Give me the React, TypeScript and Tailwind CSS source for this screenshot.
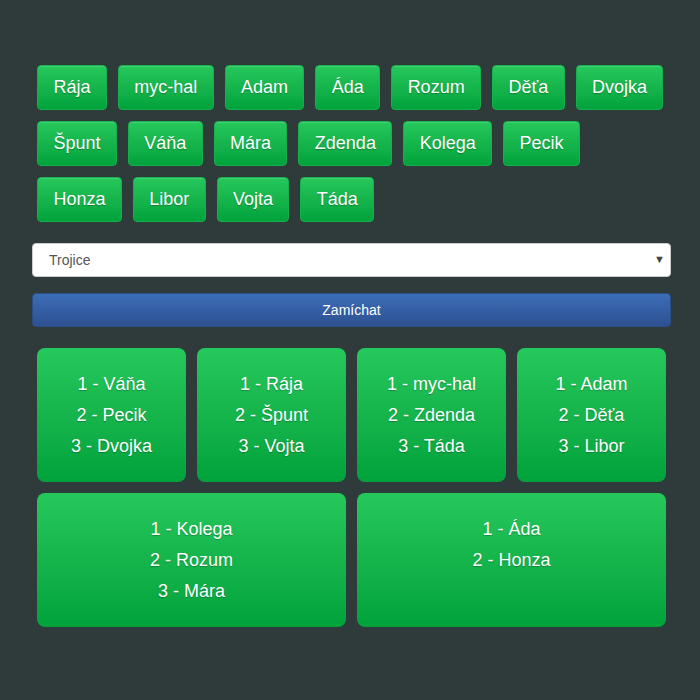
import React, { useState } from 'react';

const people = [
  'Rája', 'myc-hal', 'Adam', 'Áda', 'Rozum', 'Děťa', 'Dvojka',
  'Špunt', 'Váňa', 'Mára', 'Zdenda', 'Kolega', 'Pecik',
  'Honza', 'Libor', 'Vojta', 'Táda',
];

const groups: string[][] = [
  ['Váňa', 'Pecik', 'Dvojka'],
  ['Rája', 'Špunt', 'Vojta'],
  ['myc-hal', 'Zdenda', 'Táda'],
  ['Adam', 'Děťa', 'Libor'],
  ['Kolega', 'Rozum', 'Mára'],
  ['Áda', 'Honza'],
];

const greenBox =
  'bg-gradient-to-b from-[#25c85c] to-[#00a23c] text-white [text-shadow:0_1px_1px_rgba(0,0,0,0.25)]';

const App: React.FC = () => {
  const [mode, setMode] = useState('Trojice');

  return (
    <div className="min-h-screen bg-[#2f3b3b] pt-[60px] font-['Liberation_Sans',Arial,sans-serif]">
      <div className="ml-8 w-[639px]">
        {/* People */}
        <div className="flex flex-wrap gap-[11px] p-[5px]">
          {people.map((name) => (
            <button
              key={name}
              className={`${greenBox} rounded-[4px] border border-[#16b04c] px-[15.4px] py-[9px] text-[18px] leading-[25px] shadow-[inset_0_1px_0_rgba(255,255,255,0.15)]`}
            >
              {name}
            </button>
          ))}
        </div>

        {/* Mode select */}
        <div className="relative mt-4">
          <select
            value={mode}
            onChange={(e) => setMode(e.target.value)}
            className="h-[34px] w-full appearance-none rounded-[4px] border border-[#cccccc] bg-white pl-4 text-[14px] text-[#555555] outline-none"
          >
            <option>Dvojice</option>
            <option>Trojice</option>
            <option>Čtveřice</option>
          </select>
          <span className="pointer-events-none absolute right-[6px] top-[8px] text-[11px] text-[#444444]">▼</span>
        </div>

        <button className="mt-4 h-[34px] w-full rounded-[4px] border border-[#2a4e88] bg-gradient-to-b from-[#3c6db8] to-[#2d5190] text-[14px] text-white">
          Zamíchat
        </button>

        {/* Groups */}
        <div className="mt-4 flex flex-wrap gap-[11px] p-[5px]">
          {groups.map((group, i) => (
            <div
              key={i}
              className={`${greenBox} flex-1 basis-[140px] rounded-lg py-[20.5px] text-center text-[18px] leading-[31px]`}
            >
              {group.map((name, j) => (
                <div key={name}>
                  {j + 1} - {name}
                </div>
              ))}
            </div>
          ))}
        </div>
      </div>
    </div>
  );
};

export default App;
